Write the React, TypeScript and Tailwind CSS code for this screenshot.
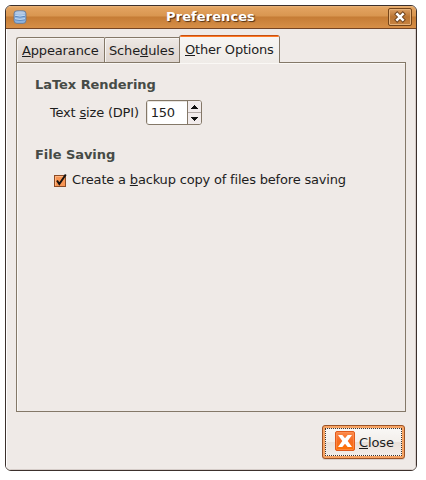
import React from "react";

function Mnemonic({ children }: { children: React.ReactNode }) {
  return <span className="underline decoration-1 underline-offset-[1px] [text-decoration-skip-ink:none]">{children}</span>;
}

function DatabaseIcon() {
  return (
    <svg width="14" height="14" viewBox="0 0 14 14">
      <path d="M1 3.5Q1 .8 4 .8H10Q13 .8 13 3.5V10.5Q13 13.4 10 13.4H4Q1 13.4 1 10.5Z" fill="#8fb3de" stroke="#65758e" strokeWidth=".8" />
      <path d="M2 3Q2 1.3 7 1.3T12 3Q12 4.8 7 4.8T2 3Z" fill="#b4cae6" />
      <path d="M2 6.3Q7 7.8 12 6.3M2 9.8Q7 11.3 12 9.8" fill="none" stroke="#5f8cc4" />
      <path d="M2 5.2Q7 6.8 12 5.2M2 8.6Q7 10.1 12 8.6" fill="none" stroke="#c2daf2" />
    </svg>
  );
}

function TitleBar() {
  return (
    <header className="flex h-[23px] shrink-0 items-center border-b border-[#744424] bg-[linear-gradient(#eab57c_0,#e2a25f_2px,#d99650_10px,#c57c35_11px,#ce863f_17px,#d78f47_22px)] pl-[7px] pr-1">
      <DatabaseIcon />
      <h1 className="flex-1 pl-[6px] text-center text-[13px] leading-[22px] font-bold tracking-[0.08px] text-white [text-shadow:1px_1px_1px_#4e2d13]">
        Preferences
      </h1>
      <button aria-label="Close window" className="flex h-[18px] w-6 items-center justify-center rounded-[2px] border border-[#754519] bg-[linear-gradient(#dda064,#ba7431_50%,#c78341)] shadow-[inset_0_0_0_1px_#e5b27c]">
        <svg width="12" height="12" viewBox="0 0 12 12">
          <path d="M3.2 3.2L8.8 8.8M8.8 3.2L3.2 8.8" stroke="#70441f" strokeWidth="4.4" strokeLinecap="square" />
          <path d="M3.2 3.2L8.8 8.8M8.8 3.2L3.2 8.8" stroke="#fff" strokeWidth="2.5" strokeLinecap="square" />
        </svg>
      </button>
    </header>
  );
}

function Tabs() {
  const idle = "flex h-[25px] items-center border-t border-l border-[#847868] bg-[linear-gradient(#eee9e5,#e3dbd6_60%,#ded5cf)] shadow-[inset_1px_1px_0_#f8f5f2]";
  return (
    <nav className="flex h-[27px] items-end text-[13px] leading-[15px]">
      <div className={idle + " w-[88px] rounded-tl-[3px] pl-[5px] tracking-[-0.15px]"}><span><Mnemonic>A</Mnemonic>ppearance</span></div>
      <div className={idle + " w-[75px] rounded-tl-[2px] pl-1 tracking-[-0.14px]"}><span>Sche<Mnemonic>d</Mnemonic>ules</span></div>
      <div className="relative -mb-px h-7 w-[101px] overflow-hidden rounded-t-[3px] border-x border-[#847868] bg-[linear-gradient(#f8f6f4,#efebe7)] pt-[7px] pl-[5px] tracking-[-0.2px] whitespace-nowrap">
        <div className="absolute inset-x-0 top-0 h-[2px] border-t border-[#c65012] bg-[#ff7925]" />
        <Mnemonic>O</Mnemonic>ther Options
      </div>
    </nav>
  );
}

function SpinBox() {
  return (
    <div className="ml-[7px] flex h-[25px] w-[56px] overflow-hidden rounded-[3px] border border-[#847868] bg-white">
      <span className="flex w-[41px] items-center border-r border-[#847868] pl-1 text-[13px] tracking-[-0.27px] shadow-[inset_1px_1px_0_#e8e4df]">150</span>
      <div className="flex flex-1 flex-col bg-[#f2ecec]">
        <div className="flex flex-1 items-center justify-center border-b border-[#b1a8a5]">
          <svg width="7" height="4"><path d="M3 0h1v1h1v1h1v1h1v1H0V3h1V2h1V1h1z" fill="#111" /></svg>
        </div>
        <div className="flex flex-1 items-center justify-center">
          <svg width="7" height="4"><path d="M0 0h7v1H6v1H5v1H4v1H3V3H2V2H1V1H0z" fill="#111" /></svg>
        </div>
      </div>
    </div>
  );
}

function CheckBox() {
  return (
    <svg width="14" height="15" viewBox="0 0 14 15">
      <rect x=".5" y="3.5" width="11" height="11" fill="#f79554" stroke="#8a4b26" />
      <path d="M1.5 13.5V4.5H10.5" fill="none" stroke="#ffb581" />
      <path d="M3 8.5L5.3 12L11.8 2.5" fill="none" stroke="#17120f" strokeWidth="2" />
    </svg>
  );
}

function CloseButton() {
  return (
    <button className="mr-px flex h-[34px] w-[83px] rounded-[3px] border border-[#9c5326] bg-[#f7a464] p-[2px] shadow-[0_1px_0_#d8cfca]">
      <span className="flex h-full w-full items-center border border-dotted border-[#3d3631] bg-[linear-gradient(#f9f7f5_0,#f3efeb_48%,#e9e0da_52%,#f1ece8)] pl-[9px]">
        <svg className="mb-[2px]" width="20" height="20" viewBox="0 0 20 20">
          <defs><linearGradient id="closeFill" x2="0" y2="1"><stop stopColor="#fc8a4c" /><stop offset=".5" stopColor="#f66b22" /><stop offset="1" stopColor="#ff7100" /></linearGradient></defs>
          <rect x=".5" y=".5" width="19" height="19" rx="1.5" fill="url(#closeFill)" stroke="#df5a1c" />
          <rect x="1.5" y="1.5" width="17" height="17" rx="1" fill="none" stroke="#ff965c" opacity=".6" />
          <path d="M3 4H7.3L10 7.2L12.7 4H17L12.7 10L17 16H12.7L10 12.8L7.3 16H3L7.3 10Z" fill="#fff" />
        </svg>
        <span className="ml-[4px] text-[13px] leading-[15px] tracking-[-0.1px]"><Mnemonic>C</Mnemonic>lose</span>
      </span>
    </button>
  );
}

export default function App() {
  return (
    <div className="h-[480px] w-[426px] bg-white pt-[5px] pl-[5px] font-['DejaVu_Sans',sans-serif] text-[#1d1d1d]">
      <main className="flex h-[466px] w-[412px] flex-col overflow-hidden rounded-t-[6px] rounded-b-[6px] border border-[#3c302c] bg-[#efebe7]">
        <TitleBar />
        <div className="flex flex-1 flex-col bg-[#efeae7] px-[10px] pt-[6px] shadow-[inset_1px_0_0_#fff,inset_-1px_-1px_0_#d5ccc8]">
          <Tabs />
          <section className="h-[350px] w-[390px] border border-[#847868] pt-[14px] pl-[18px] shadow-[inset_1px_1px_0_#faf8f5]">
            <h2 className="text-[13px] leading-4 font-bold tracking-[-0.05px] text-[#464b46]">LaTex Rendering</h2>
            <div className="mt-[7px] flex h-[25px] items-center pl-[15px] text-[13px] leading-[15px]">
              <span className="tracking-[-0.19px]">Text <Mnemonic>s</Mnemonic>ize (DPI)</span><SpinBox />
            </div>
            <h2 className="mt-[22px] text-[13px] leading-4 font-bold tracking-[-0.05px] text-[#464b46]">File Saving</h2>
            <label className="mt-[9px] flex items-center pl-[19px] text-[13px] leading-[15px]">
              <CheckBox />
              <span className="ml-[4px] tracking-[-0.18px]">Create a <Mnemonic>b</Mnemonic>ackup copy of files before saving</span>
            </label>
          </section>
          <footer className="mt-[13px] flex justify-end"><CloseButton /></footer>
        </div>
      </main>
    </div>
  );
}
